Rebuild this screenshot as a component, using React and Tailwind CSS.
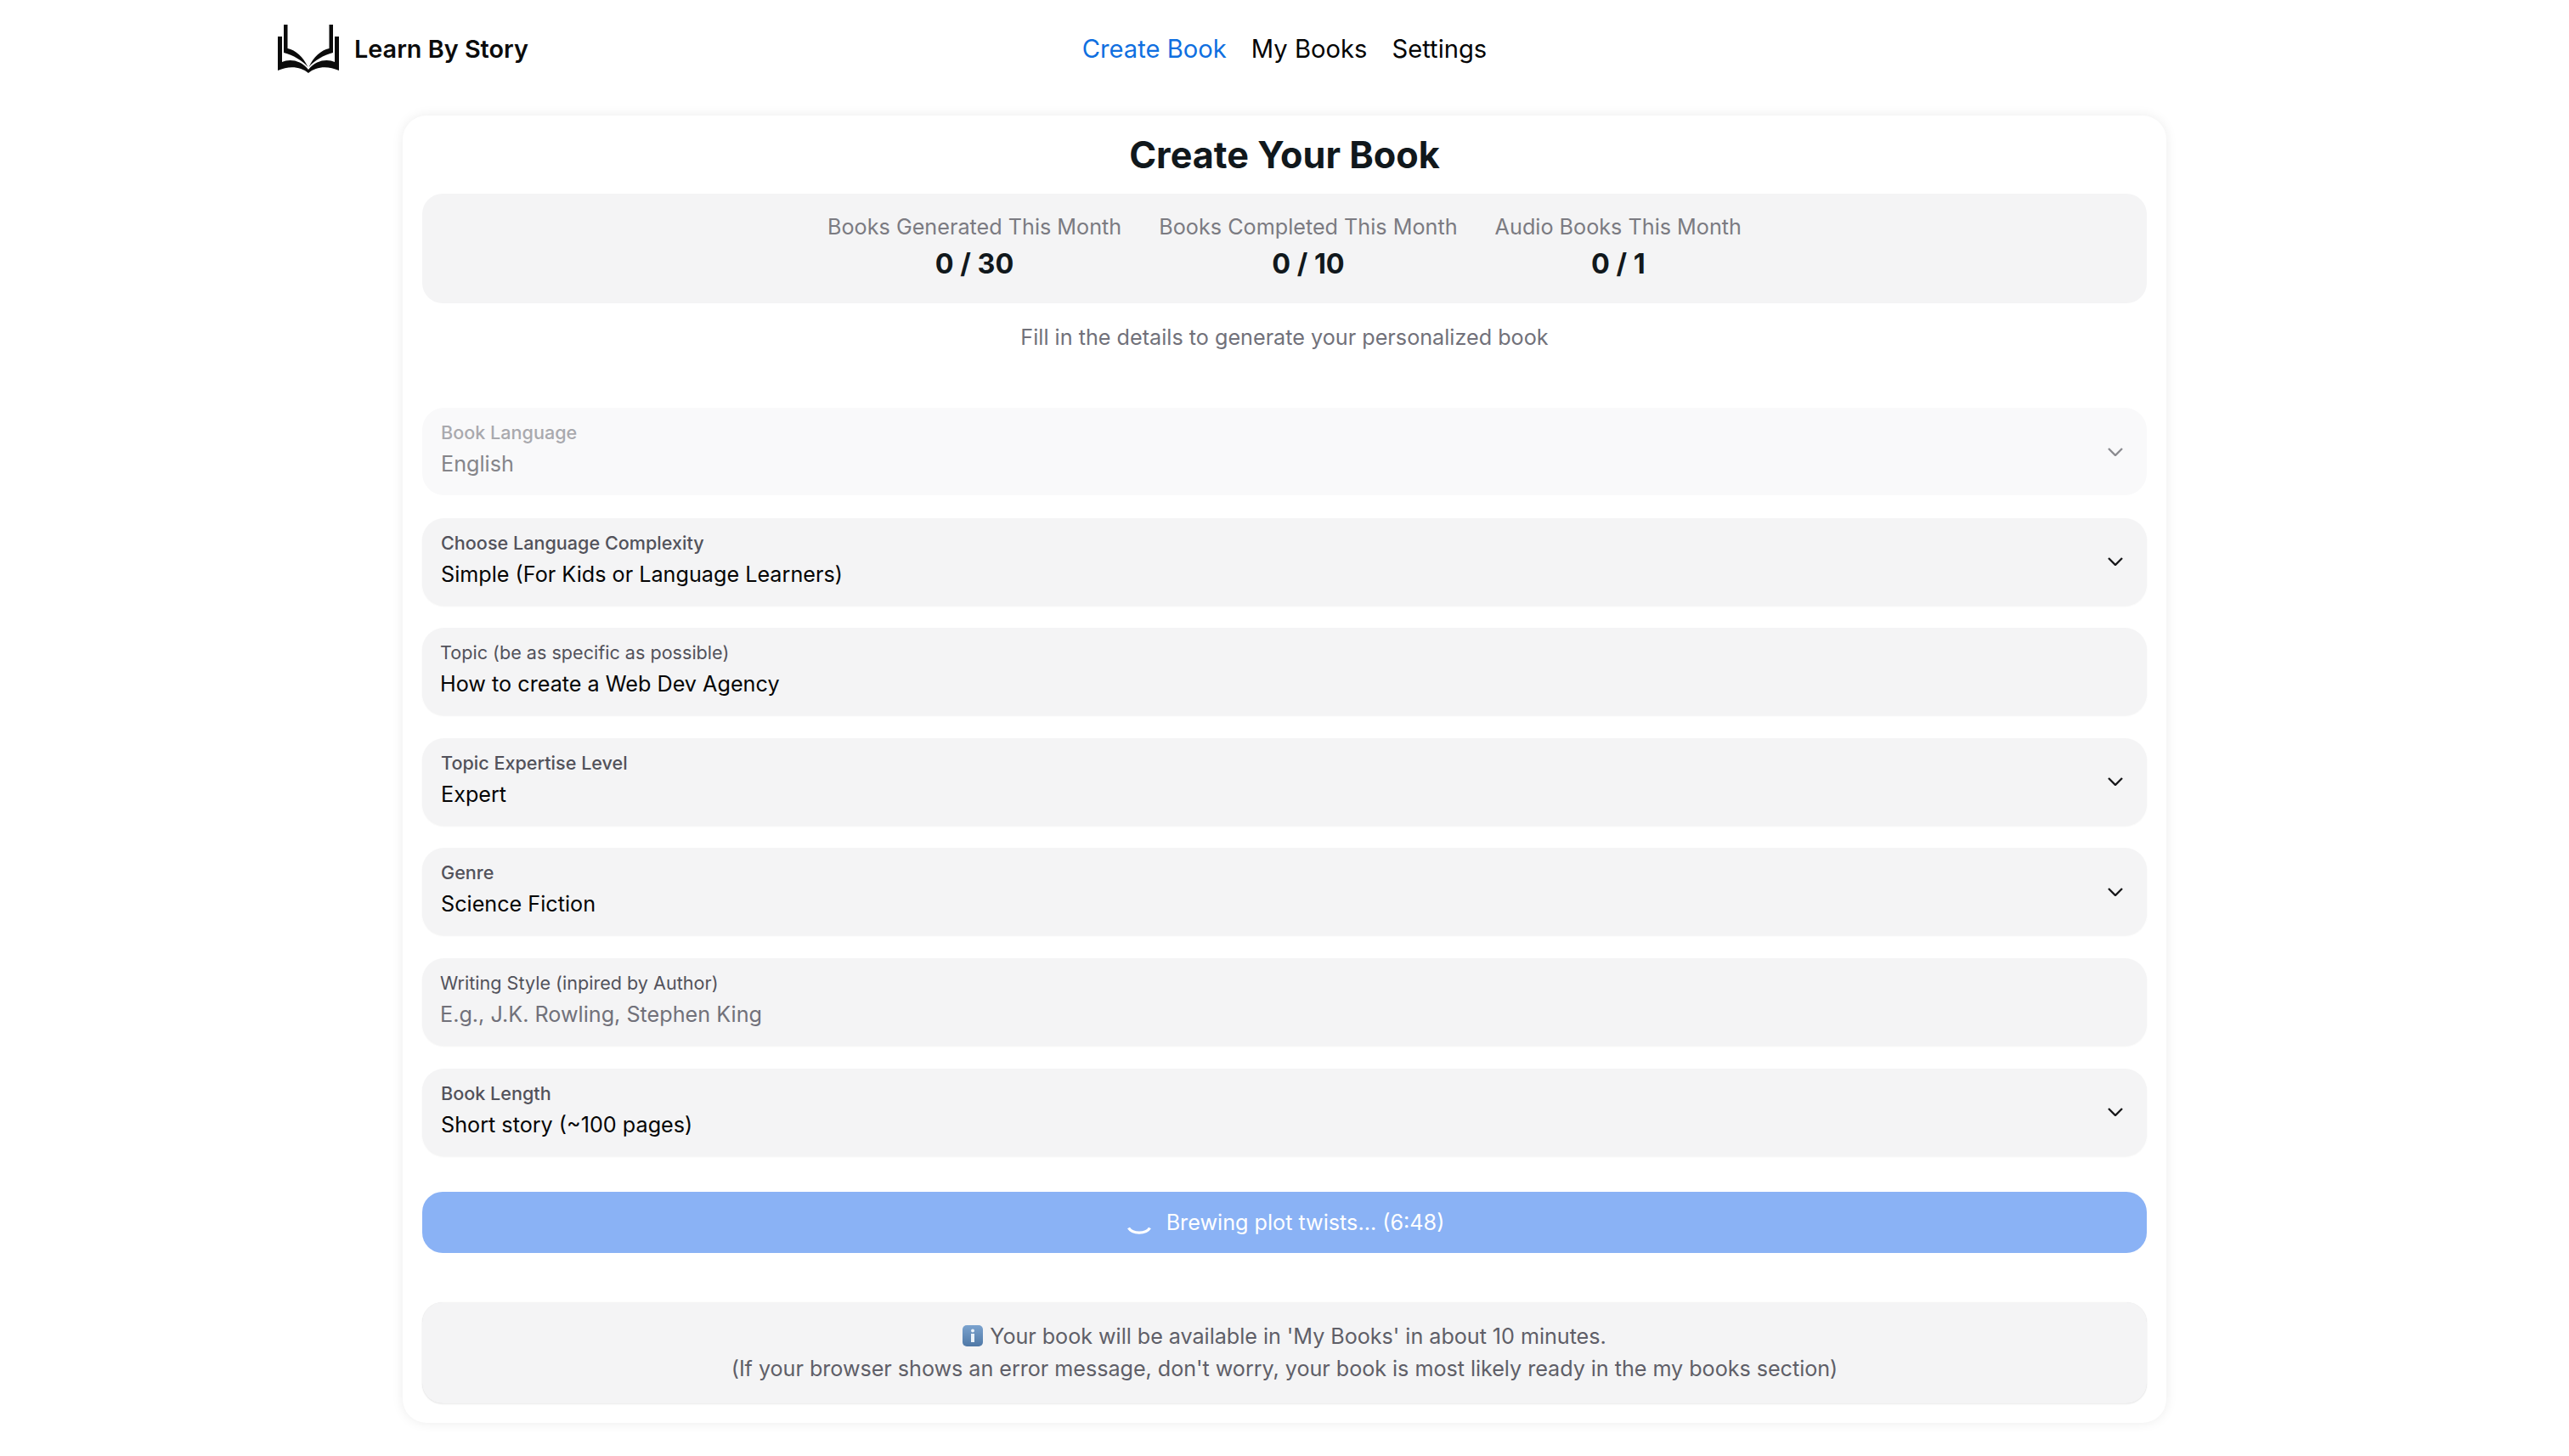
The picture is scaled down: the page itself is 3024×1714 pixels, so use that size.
import React from "react";

const stats = [
  { label: "Books Generated This Month", value: "0 / 30" },
  { label: "Books Completed This Month", value: "0 / 10" },
  { label: "Audio Books This Month", value: "0 / 1" },
];

const fields = [
  { label: "Book Language", value: "English", select: true, disabled: true },
  { label: "Choose Language Complexity", value: "Simple (For Kids or Language Learners)", select: true },
  { label: "Topic (be as specific as possible)", value: "How to create a Web Dev Agency" },
  { label: "Topic Expertise Level", value: "Expert", select: true },
  { label: "Genre", value: "Science Fiction", select: true },
  { label: "Writing Style (inpired by Author)", value: "E.g., J.K. Rowling, Stephen King", placeholder: true },
  { label: "Book Length", value: "Short story (~100 pages)", select: true },
];

function Logo() {
  const half = (
    <>
      <path d="M0 14h5v30C13 40 27 41 36 53v4C27 49 13 48 0 54Z" />
      <path d="M7 0h4.500v28C21 30 30 38 35.500 50 29 42 18 36 7 33Z" />
    </>
  );
  return (
    <svg viewBox="0 0 72 58" className="h-[58px] w-[72px] shrink-0" fill="#0b0b0b">
      {half}
      <g transform="matrix(-1 0 0 1 72 0)">{half}</g>
    </svg>
  );
}

function Chevron({ muted }) {
  return (
    <svg
      viewBox="0 0 18 10"
      fill="none"
      stroke="currentColor"
      strokeWidth="2.4"
      className={`h-[10px] w-[18px] shrink-0 ${muted ? "text-[#8b8b90]" : "text-[#18181b]"}`}
    >
      <path d="M1 1l8 8 8-8" />
    </svg>
  );
}

function Field({ label, value, select, disabled, placeholder }) {
  return (
    <div
      className={`flex h-[103px] items-center justify-between rounded-[26px] pr-[28px] ${
        select ? "pl-[22px]" : "pl-[21px]"
      } ${disabled ? "bg-[#f9f9fa]" : "bg-[#f4f4f5] shadow-[0_1px_2px_rgba(0,0,0,0.05)]"}`}
    >
      <div className="flex flex-col pb-[5px]">
        <span
          className={`text-[21.6px] leading-[34px] ${select ? "font-medium" : "font-normal"} ${
            disabled ? "text-[#a9a9ae]" : "text-[#52525b]"
          }`}
        >
          {label}
        </span>
        <span
          className={`text-[25.2px] leading-[40px] ${
            disabled ? "text-[#85858a]" : placeholder ? "text-[#71717a]" : "text-[#050505]"
          }`}
        >
          {value}
        </span>
      </div>
      {select && <Chevron muted={disabled} />}
    </div>
  );
}

function InfoIcon() {
  return (
    <svg viewBox="0 0 24 25" className="mr-[8px] mb-[5px] inline-block h-[25px] w-[24px] align-middle">
      <defs>
        <linearGradient id="info-bg" x1="0" y1="0" x2="0" y2="1">
          <stop offset="0" stopColor="#7ba3cf" />
          <stop offset="1" stopColor="#4f78a6" />
        </linearGradient>
      </defs>
      <rect width="24" height="25" rx="5" fill="url(#info-bg)" />
      <circle cx="12" cy="6.500" r="2" fill="#eaf2fa" />
      <rect x="10" y="10" width="4" height="10" fill="#eaf2fa" />
    </svg>
  );
}

export default function App() {
  return (
    <div className="min-h-[1714px] bg-white font-['Inter',sans-serif] text-[#11181c]">
      <header className="grid h-[116px] grid-cols-[1fr_auto_1fr] items-center">
        <div className="flex items-center gap-[18px] pl-[327px]">
          <Logo />
          <span className="text-[28.8px] font-semibold text-[#0b0b0b]">Learn By Story</span>
        </div>
        <nav className="flex items-center gap-[29px] text-[29.2px] leading-[48px] text-[#050505]">
          <a className="text-[#0f6fe0]">Create Book</a>
          <a>My Books</a>
          <a>Settings</a>
        </nav>
        <div />
      </header>

      <main className="mt-[20px] flex justify-center">
        <div className="w-[2076px] rounded-[28px] bg-white px-[23px] pt-[16px] pb-[23px] shadow-[0_0_14px_rgba(0,0,0,0.08)]">
          <h1 className="text-center text-[43.2px] leading-[60px] font-bold">Create Your Book</h1>

          <div className="mt-[16px] flex h-[129px] items-center justify-center gap-[44px] rounded-[24px] bg-[#f4f4f5] pb-[6px]">
            {stats.map((stat) => (
              <div key={stat.label} className="flex flex-col items-center">
                <span className="text-[25.2px] leading-[42px] text-[#7b7b82]">{stat.label}</span>
                <span className="mt-[1px] text-[32.4px] leading-[44px] font-bold">{stat.value}</span>
              </div>
            ))}
          </div>

          <p className="mt-[20px] text-center text-[25.2px] leading-[40px] text-[#71717a]">
            Fill in the details to generate your personalized book
          </p>

          <div className="mt-[63px] flex flex-col gap-[26.6px]">
            {fields.map((field) => (
              <Field key={field.label} {...field} />
            ))}
          </div>

          <div className="mt-[42px] flex h-[72px] items-center justify-center gap-[18px] rounded-[24px] bg-[#8ab2f5] pt-[2px] pl-[3px] text-[25.2px] text-white">
            <svg viewBox="0 0 28 10" fill="none" stroke="white" strokeWidth="3.400" className="mt-[18px] h-[10px] w-[28px]">
              <path d="M1.500 1.500C6 9 22 9 26.500 1.500" />
            </svg>
            <span>Brewing plot twists... (6:48)</span>
          </div>

          <div className="mt-[58px] flex h-[119px] flex-col items-center justify-center rounded-[24px] bg-[#f4f4f5] text-[25.2px] leading-[38px] tracking-[-0.05px] text-[#5f5f68] shadow-[0_1px_2px_rgba(0,0,0,0.08),0_0_1px_rgba(0,0,0,0.1)]">
            <p>
              <InfoIcon />
              Your book will be available in 'My Books' in about 10 minutes.
            </p>
            <p>(If your browser shows an error message, don't worry, your book is most likely ready in the my books section)</p>
          </div>
        </div>
      </main>
    </div>
  );
}
